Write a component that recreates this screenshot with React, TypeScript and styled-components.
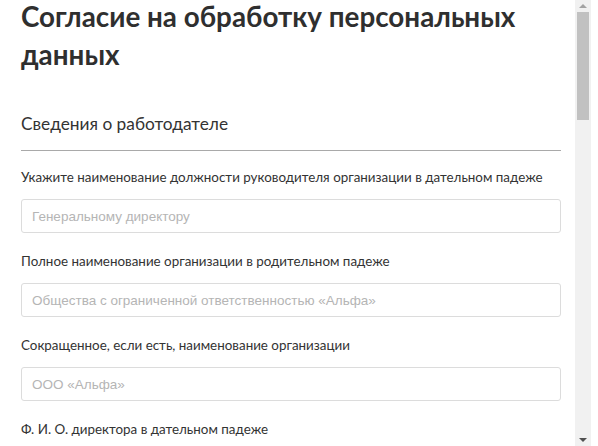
import React from "react";
import styled, { createGlobalStyle } from "styled-components";

const GlobalStyle = createGlobalStyle`
    html, body {
        margin: 0;
        padding: 0;
        background: #ffffff;
    }
    body {
        font-family: Lato, "Liberation Sans", Arial, sans-serif;
        color: #333333;
    }
`;

const Window = styled.div`
    width: 598px;
    height: 446px;
    display: flex;
    flex-direction: row;
    background: #ffffff;
`;

const Viewport = styled.div`
    width: 575px;
    height: 100%;
    overflow: hidden;
`;

// classic scrollbar drawn beside the viewport
const Rail = styled.div`
    width: 16px;
    height: 100%;
    background: #f1f1f1;
    display: flex;
    flex-direction: column;
`;

const Arrow = styled.div<{ $dir: "up" | "down" }>`
    height: 12px;
    flex: none;
    display: flex;
    align-items: center;
    justify-content: center;
    &::after {
        content: "";
        width: 0;
        height: 0;
        border-left: 4px solid transparent;
        border-right: 4px solid transparent;
        ${(p) => p.$dir === "up"
            ? "border-bottom: 4px solid #a3a3a3;"
            : "border-top: 4px solid #505050;"}
    }
`;

const Thumb = styled.div`
    height: 108px;
    margin: 0 2px;
    background: #c1c1c1;
    flex: none;
`;

const Spacer = styled.div`
    flex: 1;
`;

const Form = styled.form`
    padding: 0 14px 40px 21px;
    display: flex;
    flex-direction: column;
`;

const Title = styled.h1`
    font-size: 27.8px;
    line-height: 38px;
    font-weight: 700;
    color: #2f2f2f;
    margin: -2px 0 38px 0;
`;

const Section = styled.h2`
    font-size: 17.3px;
    line-height: 24px;
    font-weight: 400;
    color: #333333;
    margin: 0;
    padding-bottom: 14px;
    border-bottom: 1px solid #a9a9a9;
    margin-bottom: 17px;
`;

const Field = styled.div`
    display: flex;
    flex-direction: column;
    gap: 13px;
    margin-bottom: 19px;
`;

const Label = styled.label`
    font-size: 13.4px;
    line-height: 18px;
    color: #333333;
`;

const Input = styled.input`
    height: 34px;
    box-sizing: border-box;
    border: 1px solid #dcdcdc;
    border-radius: 3px;
    padding: 0 10px;
    font-family: "Liberation Sans", Arial, sans-serif;
    font-size: 13.5px;
    color: #333333;
    outline: none;
    &::placeholder {
        color: #b5b5b5;
    }
`;

type FieldProps = {
    label: string,
    placeholder?: string,
}

const FormField = (props: FieldProps) => (
    <Field>
        <Label>{props.label}</Label>
        <Input placeholder={props.placeholder || ""} />
    </Field>
);

const employerFields: FieldProps[] = [
    { label: "Укажите наименование должности руководителя организации в дательном падеже", placeholder: "Генеральному директору" },
    { label: "Полное наименование организации в родительном падеже", placeholder: "Общества с ограниченной ответственностью «Альфа»" },
    { label: "Сокращенное, если есть, наименование организации", placeholder: "ООО «Альфа»" },
    { label: "Ф. И. О. директора в дательном падеже", placeholder: "Иванову Ивану Ивановичу" },
];

const App = () => {
    return (
        <>
            <GlobalStyle />
            <Window>
                <Viewport>
                    <Form onSubmit={(e) => e.preventDefault()}>
                        <Title>Согласие на обработку персональных данных</Title>
                        <Section>Сведения о работодателе</Section>
                        {employerFields.map((f) => <FormField key={f.label} {...f} />)}
                    </Form>
                </Viewport>
                <Rail>
                    <Arrow $dir="up" />
                    <Thumb />
                    <Spacer />
                    <Arrow $dir="down" />
                </Rail>
            </Window>
        </>
    );
}

export default App;
